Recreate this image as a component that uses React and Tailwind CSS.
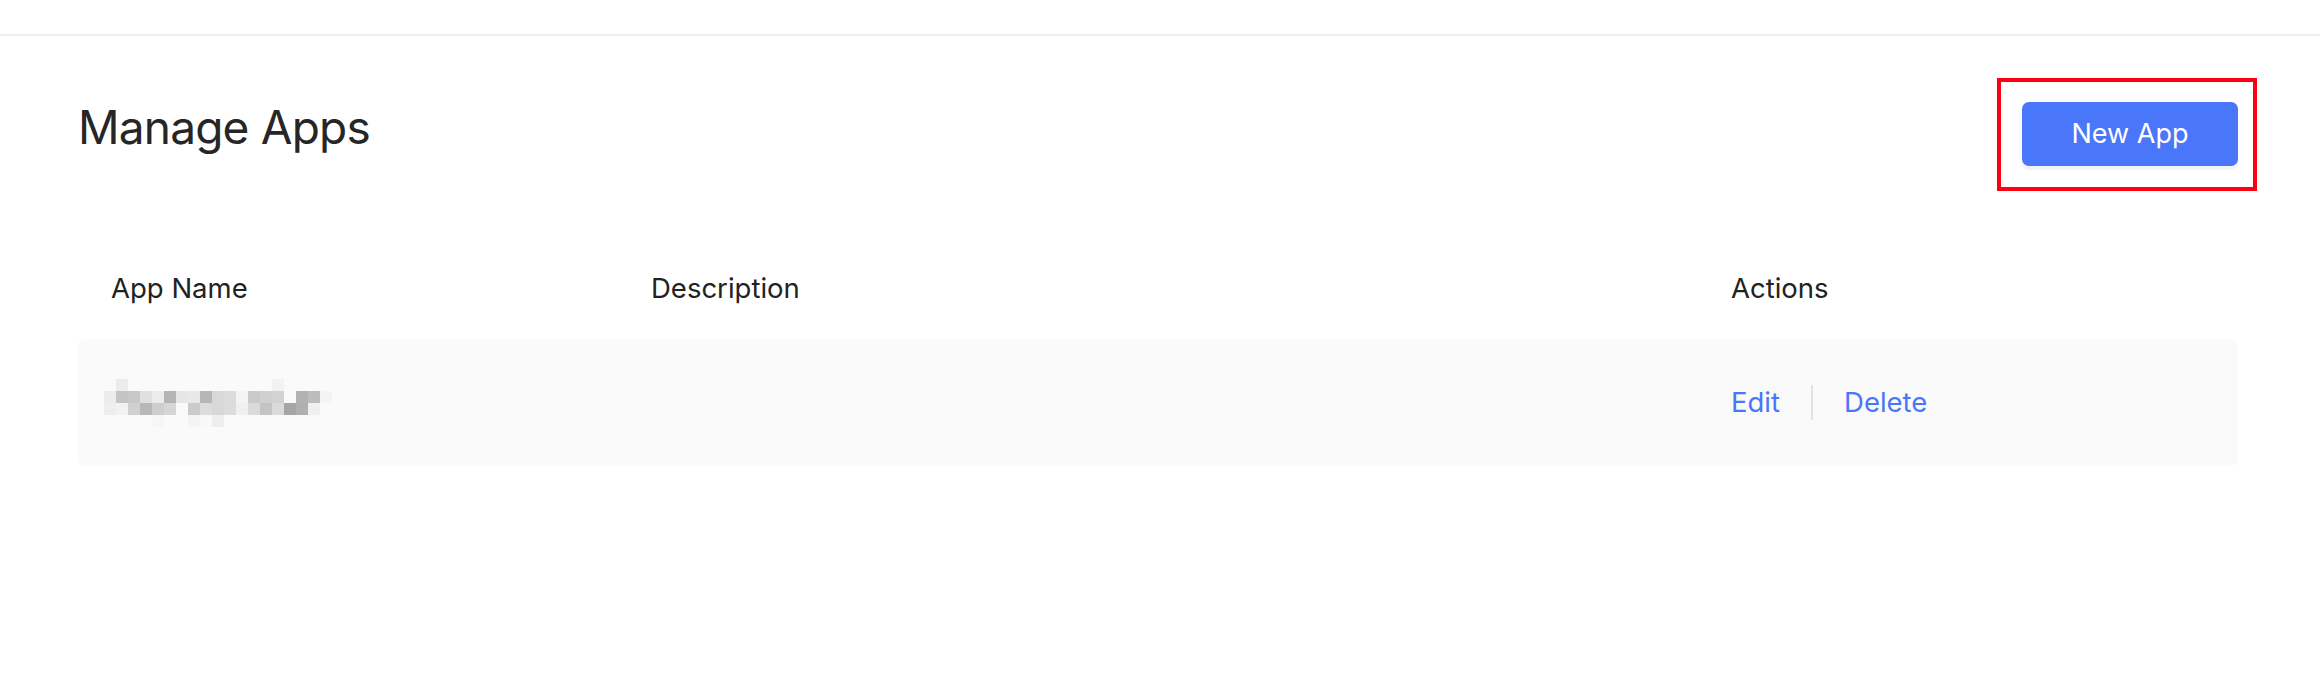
import React from 'react'

// pixelated (blurred) app name, 12px cells
const BLUR = [
  [null, '#ececec', null, null, null, null, null, null, null, null, null, null, null, null, '#f2f2f2', null, null, null, null],
  ['#ececec', '#c4c4c4', '#c8c8c8', '#e0e0e0', '#ececec', '#b4b4b4', '#e6e6e6', '#e8e8e8', '#b6b6b6', '#d8d8d8', '#dcdcdc', '#f4f4f4', '#cacaca', '#d0d0d0', '#d2d2d2', null, '#b2b2b2', '#bcbcbc', '#f4f4f4'],
  ['#eeeeee', '#f2f2f2', '#d0d0d0', '#b8b8b8', '#cecece', '#d6d6d6', null, '#cacaca', '#dcdcdc', '#d8d8d8', '#dcdcdc', '#f0f0f0', '#dadada', '#c4c4c4', '#dadada', '#a6a6a6', '#b0b0b0', '#f0f0f0', null],
  [null, null, null, null, '#f6f6f6', null, null, '#f4f4f4', '#f8f8f8', '#eeeeee', null, null, null, null, null, null, null, null, null],
]

function BlurredName() {
  return (
    <div className="grid grid-cols-[repeat(19,12px)] grid-rows-[repeat(4,12px)]">
      {BLUR.flatMap((row, r) =>
        row.map((c, i) => <div key={`${r}-${i}`} style={c ? { background: c } : {}} />)
      )}
    </div>
  )
}

export default function App() {
  return (
    <div className="min-h-[674px] bg-white text-[#222]" style={{ fontFamily: 'Inter, "Noto Sans", sans-serif' }}>
      {/* top bar */}
      <div className="h-[36px] border-b-2 border-[#eeeeee]" />

      <main className="pl-[78px] pr-[82px] pt-[62px]">
        {/* ── header ── */}
        <div className="flex items-start justify-between">
          <h1 className="text-[46px] leading-[58px] font-normal text-[#262626] tracking-[-0.8px]">Manage Apps</h1>
          <div className="relative mt-[4px]">
            <button className="w-[216px] h-[64px] rounded-[7px] bg-[#4a76f9] text-white text-[27px] shadow-[0_4px_2px_rgba(0,0,0,0.05)]">
              New App
            </button>
            <div className="absolute -left-[25px] -top-[24px] -right-[19px] -bottom-[25px] border-4 border-[#ff0013] pointer-events-none" />
          </div>
        </div>

        {/* ── table ── */}
        <div className="mt-[102px]">
          <div className="grid grid-cols-[1fr_2fr_1fr] h-[40px] items-center text-[27.5px] leading-[40px] text-[#222]">
            <div className="pl-[33px]">App Name</div>
            <div className="pl-[33px]">Description</div>
            <div className="pl-[33px]">Actions</div>
          </div>

          <div className="mt-[31px] grid grid-cols-[1fr_2fr_1fr] h-[127px] items-center bg-[#fafafa] rounded-[8px]">
            <div className="pl-[26px]"><BlurredName /></div>
            <div />
            <div className="pl-[33px] flex items-center text-[27.5px] text-[#4a76f9]">
              <span>Edit</span>
              <span className="mx-[31px] w-[2px] h-[35px] bg-[#e2e2e2]" />
              <span>Delete</span>
            </div>
          </div>
        </div>
      </main>
    </div>
  )
}
